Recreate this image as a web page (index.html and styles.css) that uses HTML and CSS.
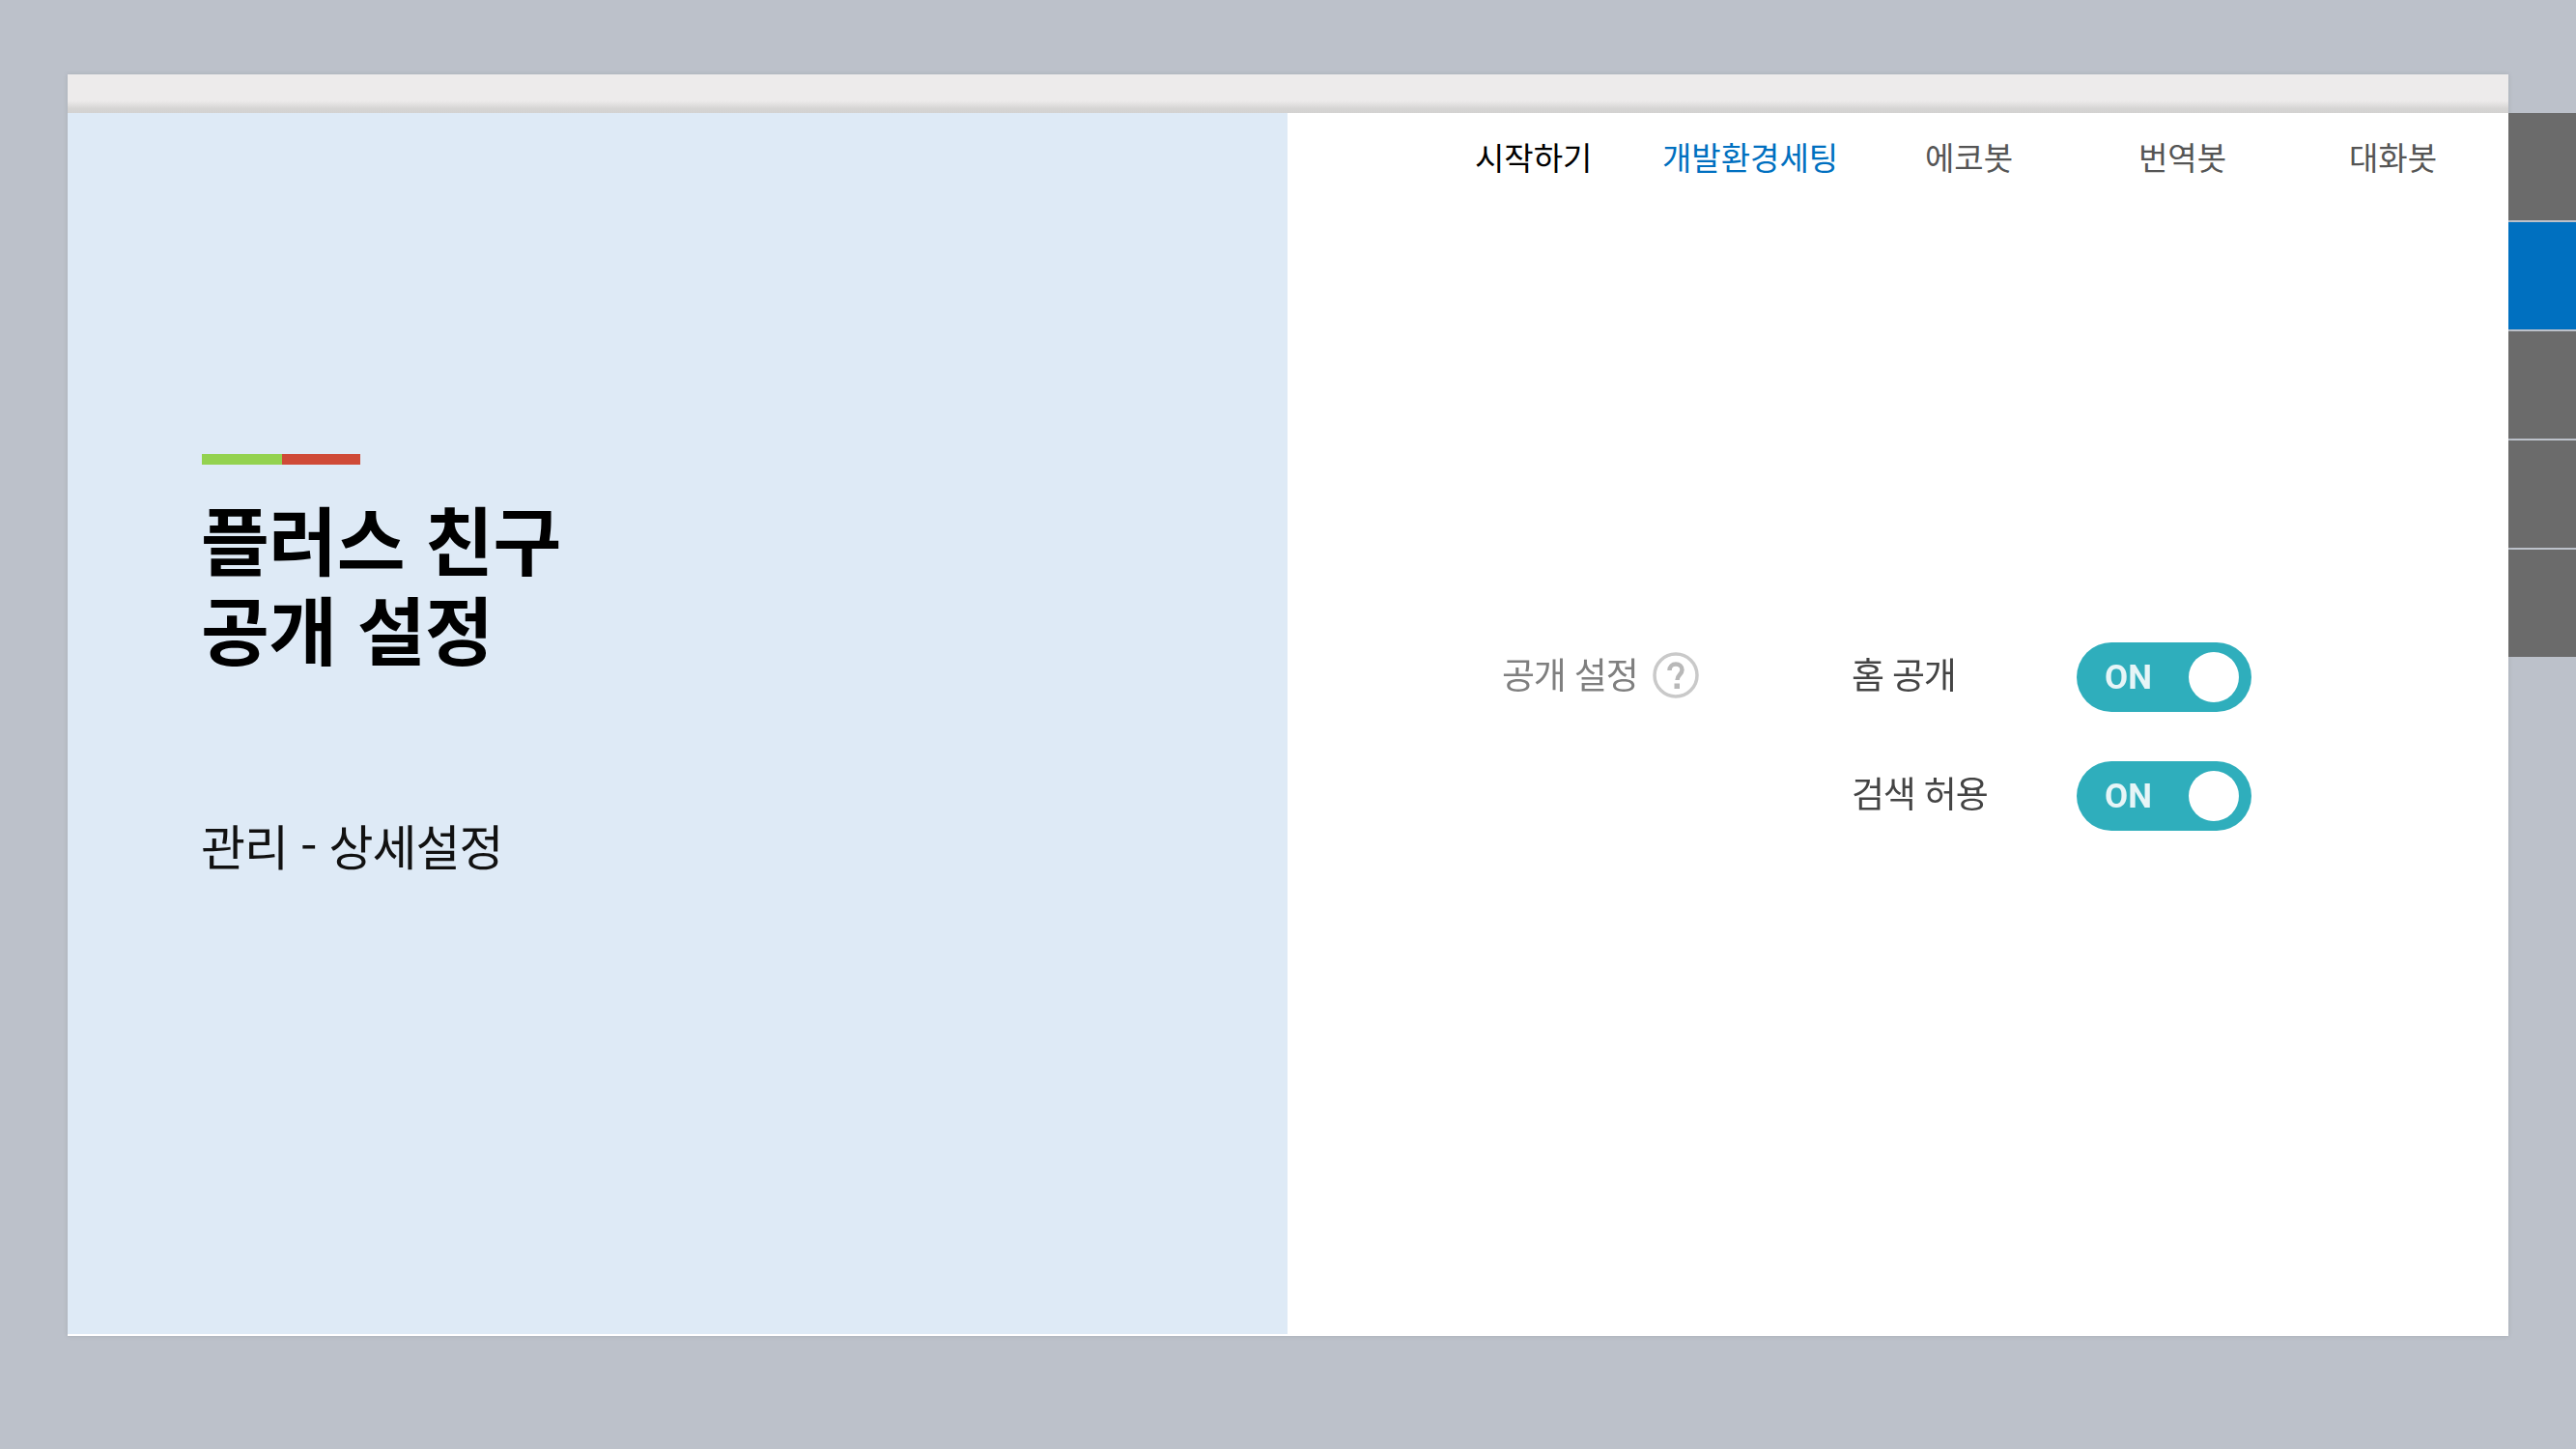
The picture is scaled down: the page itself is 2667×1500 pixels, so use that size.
FILE: index.html
```html
<!DOCTYPE html>
<html lang="ko">
<head>
<meta charset="utf-8">
<title>플러스 친구 공개 설정</title>
<link rel="stylesheet" href="styles.css">
</head>
<body>
<div class="stage">
  <main class="card">
    <div class="topbar"></div>
    <div class="content">
      <section class="intro">
        <div class="accent"><span class="accent-green"></span><span class="accent-red"></span></div>
        <h1 class="title">플러스 친구<br>공개 설정</h1>
        <p class="subtitle">관리 - 상세설정</p>
      </section>
      <section class="detail">
        <nav class="nav">
          <span class="nav-item nav-dark">시작하기</span>
          <span class="nav-item nav-active">개발환경세팅</span>
          <span class="nav-item">에코봇</span>
          <span class="nav-item">번역봇</span>
          <span class="nav-item">대화봇</span>
        </nav>
        <div class="settings">
          <div class="label">
            <span class="label-text">공개 설정</span>
            <svg class="help" viewBox="0 0 48 48" aria-hidden="true">
              <circle cx="24" cy="24" r="22" fill="none" stroke="#c9c9c9" stroke-width="3.500"/>
              <path d="M17.500 19c0-4 2.800-6.500 6.500-6.500s6.500 2.300 6.500 6c0 4.500-5 5-5 10.500" fill="none" stroke="#b8b8b8" stroke-width="4.500"/>
              <rect x="22.500" y="32.500" width="5.500" height="5.500" fill="#b8b8b8"/>
            </svg>
          </div>
          <span class="name">홈 공개</span>
          <div class="toggle"><span class="toggle-text">ON</span><span class="knob"></span></div>
          <span class="name name-second">검색 허용</span>
          <div class="toggle"><span class="toggle-text">ON</span><span class="knob"></span></div>
        </div>
      </section>
    </div>
  </main>
  <aside class="tabs">
    <div class="tab"></div>
    <div class="tab tab-active"></div>
    <div class="tab"></div>
    <div class="tab"></div>
    <div class="tab"></div>
  </aside>
</div>
</body>
</html>
```
FILE: styles.css
```css
* { box-sizing: border-box; }
html, body { margin: 0; padding: 0; }
body {
  width: 2667px;
  height: 1500px;
  overflow: hidden;
  background: #bcc1ca;
  font-family: "Noto Sans CJK KR", "Noto Sans", sans-serif;
}
.stage {
  display: flex;
  align-items: flex-start;
  padding: 77px 0 0 70px;
}
.card {
  width: 2527px;
  height: 1306px;
  display: flex;
  flex-direction: column;
  background: #fff;
  box-shadow: 0 0 4px rgba(120, 125, 135, .3);
}
.topbar {
  height: 40px;
  flex: none;
  background: linear-gradient(#edebeb 0, #edebeb 68%, #d6d5d4 88%, #d3d2d1 100%);
}
.content {
  flex: 1;
  display: flex;
  min-height: 0;
}
.intro {
  width: 1263px;
  background: #deeaf6;
  padding: 353px 0 0 139px;
  border-bottom: 2px solid #fff;
}
.accent { display: flex; width: 164px; height: 11px; }
.accent-green { width: 83px; background: #93d24f; }
.accent-red { width: 81px; background: #cf4a37; }
.title {
  margin: 29px 0 0 -1px;
  font-size: 77px;
  line-height: 93px;
  font-weight: 700;
  color: #000;
  letter-spacing: -.5px;
}
.subtitle {
  margin: 141px 0 0 -1px;
  font-size: 50px;
  line-height: 74px;
  font-weight: 400;
  color: #111;
  letter-spacing: -1px;
}
.detail {
  flex: 1;
  padding-left: 194px;
}
.nav {
  display: grid;
  grid-template-columns: 194px 272px 221px 218px auto;
  height: 91px;
  align-items: center;
}
.nav-item {
  font-size: 33px;
  line-height: 47px;
  color: #555;
  letter-spacing: 0;
}
.nav-dark { color: #000; }
.nav-active { color: #0070c0; }
.settings {
  display: grid;
  grid-template-columns: 362px 233px 181px;
  grid-auto-rows: 72px;
  row-gap: 51px;
  align-items: center;
  margin: 457px 0 0 28px;
}
.label {
  display: flex;
  align-items: center;
  gap: 15px;
  color: #7f7f7f;
  margin-top: -8px;
}
.label-text,
.name {
  font-size: 37px;
  line-height: 48px;
  letter-spacing: -1.2px;
  filter: blur(.4px);
}
.help { width: 48px; height: 48px; flex: none; margin-top: 4px; filter: blur(.5px); }
.name {
  color: #444;
  margin-top: -8px;
}
.name-second { grid-column: 2; }
.toggle {
  width: 181px;
  height: 72px;
  border-radius: 36px;
  background: #2faebc;
  display: flex;
  align-items: center;
  justify-content: space-between;
  padding: 0 13px 0 29px;
}
.toggle-text {
  font-family: Roboto, sans-serif;
  font-size: 35px;
  font-weight: 700;
  color: #e6f5f7;
  line-height: 1;
  letter-spacing: 0;
  filter: blur(.7px);
}
.knob {
  width: 52px;
  height: 52px;
  border-radius: 50%;
  background: #fff;
}
.tabs {
  flex: none;
  width: 70px;
  margin-top: 40px;
  display: flex;
  flex-direction: column;
  gap: 2px;
}
.tab {
  height: 111px;
  background: #6b6b6b;
}
.tab-active { background: #0070c0; }
```
